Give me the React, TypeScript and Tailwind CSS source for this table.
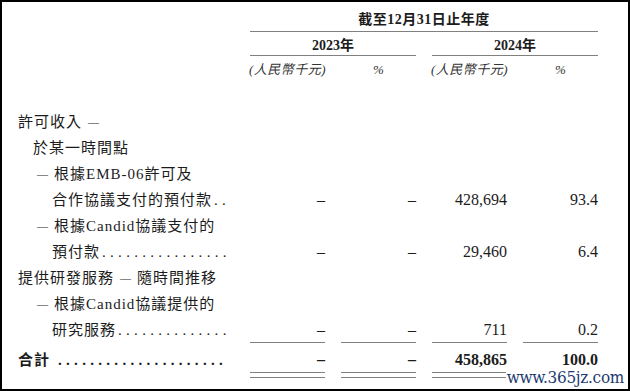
import React from 'react';

const font = { fontFamily: '"Liberation Serif", "Noto Sans CJK TC", serif' };
const grid = 'grid grid-cols-[216px_75px_75px_75px_75px] gap-x-4';

type Line = {
  label: React.ReactNode;
  indent: string;
  dots?: number;
  values?: string[];
  rule?: 'single';
};

const Dash = ({ lead }: { lead?: boolean }) => (
  <span className={`text-[11px] mr-[5px] align-middle ${lead ? 'ml-[6px]' : ''}`}>—</span>
);

const lines: Line[] = [
  { label: <>許可收入<Dash lead /></>, indent: 'pl-0' },
  { label: '於某一時間點', indent: 'pl-[15px]' },
  { label: <><Dash />根據EMB-06許可及</>, indent: 'pl-[19px]' },
  { label: '合作協議支付的預付款', indent: 'pl-[34px]', dots: 2, values: ['–', '–', '428,694', '93.4'] },
  { label: <><Dash />根據Candid協議支付的</>, indent: 'pl-[19px]' },
  { label: '預付款', indent: 'pl-[34px]', dots: 16, values: ['–', '–', '29,460', '6.4'] },
  { label: <>提供研發服務<Dash lead />隨時間推移</>, indent: 'pl-0' },
  { label: <><Dash />根據Candid協議提供的</>, indent: 'pl-[19px]' },
  { label: '研究服務', indent: 'pl-[34px]', dots: 14, values: ['–', '–', '711', '0.2'], rule: 'single' },
];

function Row({ line }: { line: Line }) {
  return (
    <div className={`${grid} h-[26px]`}>
      <div className={`flex items-center whitespace-nowrap text-[15px] tracking-[1px] ${line.indent}`}>
        {line.label}
        {line.dots ? <span className="tracking-[4.3px] ml-[2px]">{'.'.repeat(line.dots)}</span> : null}
      </div>
      {(line.values ?? ['', '', '', '']).map((v, i) => (
        <div
          key={i}
          className={`flex items-center justify-end text-[16px] ${line.rule === 'single' ? 'border-b border-[#808080]' : ''}`}
        >
          {v}
        </div>
      ))}
    </div>
  );
}

export default function App() {
  const total = ['–', '–', '458,865', '100.0'];
  return (
    <div className="relative w-[630px] h-[391px] border-2 border-black bg-white text-[#1c1c1c] pl-[16px] overflow-hidden" style={font}>
      <div className={grid}>
        <div />
        <div className="col-span-4 h-[30px] flex items-end justify-center pb-[3px] border-b border-[#808080] font-bold text-[14px] leading-[16px] tracking-[0.5px]">
          截至12月31日止年度
        </div>
      </div>
      <div className={grid}>
        <div />
        <div className="col-span-2 h-[24px] flex items-end justify-center pb-[1px] border-b border-[#808080] font-bold text-[14px] leading-[16px]">
          2023年
        </div>
        <div className="col-span-2 h-[24px] flex items-end justify-center pb-[1px] border-b border-[#808080] font-bold text-[14px] leading-[16px]">
          2024年
        </div>
      </div>
      <div className={`${grid} h-[28px] italic text-[13px] text-[#333]`}>
        <div />
        <div className="flex items-center justify-center whitespace-nowrap tracking-[0.5px]">(人民幣千元)</div>
        <div className="flex items-center justify-center">%</div>
        <div className="flex items-center justify-center whitespace-nowrap tracking-[0.5px]">(人民幣千元)</div>
        <div className="flex items-center justify-center">%</div>
      </div>

      <div className="mt-[25px]">
        {lines.map((line, i) => (
          <Row key={i} line={line} />
        ))}
      </div>

      <div className={`${grid} mt-[5px] h-[24px] font-bold`}>
        <div className="flex items-center whitespace-nowrap text-[15px] tracking-[1px]">
          合計
          <span className="tracking-[4.3px] ml-[8px]">{'.'.repeat(21)}</span>
        </div>
        {total.map((v, i) => (
          <div key={i} className="flex items-center justify-end text-[16px]">
            {v}
          </div>
        ))}
      </div>
      <div className={grid}>
        <div />
        {total.map((_, i) => (
          <div key={i} className="h-[6px] border-t border-b border-[#808080]" />
        ))}
      </div>

      <div
        className="absolute right-[4px] bottom-[3px] bg-white pl-[1px] leading-[17px] text-[17px] tracking-[-0.3px] text-[#1d3a70]"
        style={{ fontFamily: '"DejaVu Serif Condensed", "DejaVu Serif", serif' }}
      >
        www.365jz.com
      </div>
    </div>
  );
}
